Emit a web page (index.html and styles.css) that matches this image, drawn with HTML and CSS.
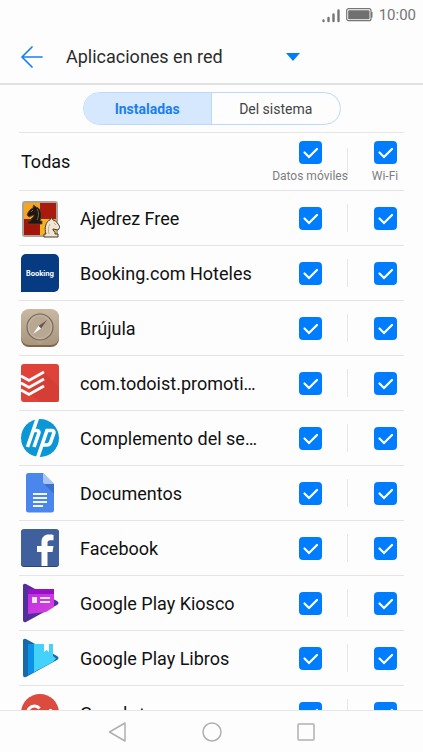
FILE: index.html
```html
<!DOCTYPE html>
<html lang="es">
<head>
    <meta charset="UTF-8">
    <meta name="viewport" content="width=device-width, initial-scale=1.0">
    <title>Aplicaciones en red</title>
    <link rel="stylesheet" href="styles.css">
</head>
<body>
<div class="status-bar">
    <svg class="signal" viewBox="0 0 18 15" width="18" height="15" stroke="#757575" stroke-width="2.400" stroke-linecap="round">
        <path d="M1.500 12.500v0.500M6.500 10v3M11.500 6.500v6.500M16.500 2.500v10.500"/>
    </svg>
    <svg class="battery" viewBox="0 0 27 14" width="27" height="14">
        <rect x="0.700" y="0.700" width="24.300" height="12" rx="2" fill="none" stroke="#757575" stroke-width="1.200"/>
        <rect x="2.200" y="2.200" width="21.300" height="9" rx="1" fill="#707070"/>
        <path d="M25 4h1.500v5.500H25z" fill="#757575"/>
    </svg>
    <span class="clock">10:00</span>
</div>

<header class="header">
    <button class="back" aria-label="Atrás">
        <svg viewBox="0 0 22 22" width="22" height="22" fill="none" stroke="#1a80ee" stroke-width="1.700" stroke-linecap="round" stroke-linejoin="round">
            <path d="M11 1L1 11l10 10M1 11h20"/>
        </svg>
    </button>
    <div class="view-picker">
        <select aria-label="Vista">
            <option>Aplicaciones en red</option>
        </select>
        <svg class="arrow" viewBox="0 0 14 8" width="14" height="8"><path d="M0 0h14L7 8z" fill="#007dff"/></svg>
    </div>
</header>

<div class="tabs">
    <button class="tab active">Instaladas</button>
    <button class="tab">Del sistema</button>
</div>

<main class="app-list">
    <table>
        <colgroup>
            <col class="col-icon">
            <col>
            <col class="col-data">
            <col class="col-wifi">
        </colgroup>
        <thead>
        <tr>
            <th class="all" colspan="2">Todas</th>
            <th class="data"><label><input type="checkbox" checked>Datos móviles</label></th>
            <th class="wifi"><label><input type="checkbox" checked>Wi-Fi</label></th>
        </tr>
        </thead>
        <tbody>
        <tr>
            <td class="icon">
                <svg viewBox="0 0 40 40" width="40" height="40">
                    <rect x="2" y="3" width="36" height="36" rx="3" fill="#aaa49e"/>
                    <path d="M4 5h16v16H4z" fill="#f6a51c"/>
                    <path d="M20 5h16v16H20z" fill="#a91b0d"/>
                    <path d="M4 21h16v16H4z" fill="#a31508"/>
                    <path d="M20 21h16v16H20z" fill="#f6b320"/>
                    <path d="M8 26v-3h2.500c0-3 4-4 3.500-6l-5 2-2-2c1-3 3-6 6-7l0.500-3 2.500 2c4 1 6 5 5 11l-1 3h2v3z" fill="#201712" stroke="#5d4129" stroke-width="0.800"/>
                    <path d="M13 12l-2 2M17 11c2 3 2 7 0 11" fill="none" stroke="#a28460" stroke-width="0.700"/>
                    <path d="M24 39v-3h2c-2-6 0-13 4-14l1-3 2 3c4 1 5 4 7 7l-2 3-5-1c-1 2 3 2 2 5h3v3z" fill="#eee5d5" stroke="#4c382a" stroke-width="1"/>
                    <path d="M30 26c-2 3-2 6-1 10M34 25l2 2" fill="none" stroke="#ad9c85" stroke-width="0.800"/>
                </svg>
            </td>
            <td class="name">Ajedrez Free</td>
            <td class="data"><input type="checkbox" aria-label="Ajedrez Free, datos móviles" checked></td>
            <td class="wifi"><input type="checkbox" aria-label="Ajedrez Free, Wi-Fi" checked></td>
        </tr>
        <tr>
            <td class="icon">
                <svg viewBox="0 0 40 40" width="40" height="40">
                    <path d="M6 1h28a5 5 0 0 1 5 5v28a5 5 0 0 1-5 5H1V6a5 5 0 0 1 5-5z" fill="#063b82"/>
                    <text class="booking-text" x="20" y="23" text-anchor="middle">Booking</text>
                </svg>
            </td>
            <td class="name">Booking.com Hoteles</td>
            <td class="data"><input type="checkbox" aria-label="Booking.com Hoteles, datos móviles" checked></td>
            <td class="wifi"><input type="checkbox" aria-label="Booking.com Hoteles, Wi-Fi" checked></td>
        </tr>
        <tr>
            <td class="icon">
                <svg viewBox="0 0 40 40" width="40" height="40">
                    <defs>
                        <linearGradient id="wood" x2="0" y2="1"><stop stop-color="#c9b8a2"/><stop offset="1" stop-color="#a9967f"/></linearGradient>
                    </defs>
                    <rect x="1" y="2" width="38" height="37" rx="8" fill="#80654d"/>
                    <rect x="1" y="1" width="38" height="36" rx="8" fill="url(#wood)"/>
                    <path d="M3 20L20 3l17 17-17 17z" fill="#b8a791" opacity="0.500"/>
                    <circle cx="20" cy="19" r="13" fill="#b8a793" stroke="#796a5c" stroke-width="1.200"/>
                    <circle cx="20" cy="19" r="11.500" fill="none" stroke="#cfc1af" stroke-width="0.600"/>
                    <path d="M27 12l-8.500 6 2.500 2.500z" fill="#6b5745"/>
                    <path d="M13 26l5.500-8 2.500 2.500z" fill="#fff"/>
                </svg>
            </td>
            <td class="name">Brújula</td>
            <td class="data"><input type="checkbox" aria-label="Brújula, datos móviles" checked></td>
            <td class="wifi"><input type="checkbox" aria-label="Brújula, Wi-Fi" checked></td>
        </tr>
        <tr>
            <td class="icon">
                <svg viewBox="0 0 40 40" width="40" height="40">
                    <rect x="1" y="1" width="38" height="38" rx="3" fill="#df4238"/>
                    <path d="M24 9l15 15v15H21l-12-9z" fill="#cb3930" opacity="0.500"/>
                    <path d="M1 13l8 4.500L24 9M1 20l8 4.500L24 16M1 27l8 4.500L24 23" fill="none" stroke="#fff" stroke-width="2.800"/>
                </svg>
            </td>
            <td class="name">com.todoist.promotion</td>
            <td class="data"><input type="checkbox" aria-label="com.todoist.promotion, datos móviles" checked></td>
            <td class="wifi"><input type="checkbox" aria-label="com.todoist.promotion, Wi-Fi" checked></td>
        </tr>
        <tr>
            <td class="icon">
                <svg viewBox="0 0 40 40" width="40" height="40">
                    <circle cx="20" cy="20" r="19" fill="#0b96d5"/>
                    <g fill="none" stroke="#fff" stroke-width="3.600">
                        <path d="M17.500 0L7.500 29M12 12.500h4.500q3.200 0 2.200 3L14 29"/>
                        <path d="M17.500 40l9.500-27.500h4.500q3.200 0 2.200 3l-3 8.500q-1 3-4 3h-4"/>
                    </g>
                </svg>
            </td>
            <td class="name">Complemento del servicio</td>
            <td class="data"><input type="checkbox" aria-label="Complemento del servicio, datos móviles" checked></td>
            <td class="wifi"><input type="checkbox" aria-label="Complemento del servicio, Wi-Fi" checked></td>
        </tr>
        <tr>
            <td class="icon">
                <svg viewBox="0 0 40 40" width="40" height="40">
                    <path d="M8 0h15l11 11v26a2.500 2.500 0 0 1-2.500 2.500h-23A2.500 2.500 0 0 1 6 37V2.500A2.500 2.500 0 0 1 8 0z" fill="#4a86ec"/>
                    <path d="M24 11h10v10z" fill="#3c70cd"/>
                    <path d="M23 0l11 11H25a2 2 0 0 1-2-2z" fill="#a9c5f6"/>
                    <path d="M13 20h14v2H13zM13 24h14v2H13zM13 28h14v2H13zM13 32h10v2H13z" fill="#f2f6fe"/>
                </svg>
            </td>
            <td class="name">Documentos</td>
            <td class="data"><input type="checkbox" aria-label="Documentos, datos móviles" checked></td>
            <td class="wifi"><input type="checkbox" aria-label="Documentos, Wi-Fi" checked></td>
        </tr>
        <tr>
            <td class="icon">
                <svg viewBox="0 0 40 40" width="40" height="40">
                    <rect x="1" y="2" width="38" height="37" rx="3" fill="#2b4275"/>
                    <rect x="1" y="1" width="38" height="37" rx="3" fill="#405f9d"/>
                    <path d="M21.500 38V24H17v-6h4.500v-4c0-5 3-7.500 7.500-7.500 2 0 3.500.2 4.500.4v5.300h-3c-2.300 0-3 1-3 3V18h6l-1 6h-5v14z" fill="#fff"/>
                </svg>
            </td>
            <td class="name">Facebook</td>
            <td class="data"><input type="checkbox" aria-label="Facebook, datos móviles" checked></td>
            <td class="wifi"><input type="checkbox" aria-label="Facebook, Wi-Fi" checked></td>
        </tr>
        <tr>
            <td class="icon">
                <svg viewBox="0 0 40 40" width="40" height="40">
                    <defs>
                        <linearGradient id="kiosk" x2="1" y2="1"><stop stop-color="#bd2de5"/><stop offset="1" stop-color="#d442dc"/></linearGradient>
                    </defs>
                    <path d="M3 2.500Q3 0 6 1l31 17q3 2 0 4L6 39q-3 1-3-2z" fill="#51309d"/>
                    <path d="M8 6h26v18l-8 5-18 2z" fill="url(#kiosk)"/>
                    <path d="M8 6h26v5H8z" fill="#9910c7"/>
                    <path d="M12 14h5v6h-5zM20 14h10v2H20zM20 18h10v2H20z" fill="#f8e6fd"/>
                </svg>
            </td>
            <td class="name">Google Play Kiosco</td>
            <td class="data"><input type="checkbox" aria-label="Google Play Kiosco, datos móviles" checked></td>
            <td class="wifi"><input type="checkbox" aria-label="Google Play Kiosco, Wi-Fi" checked></td>
        </tr>
        <tr>
            <td class="icon">
                <svg viewBox="0 0 40 40" width="40" height="40">
                    <path d="M3 2.500Q3 0 6 1l31 17q3 2 0 4L6 39q-3 1-3-2z" fill="#1769aa"/>
                    <path d="M8 6h6v28l-6 3z" fill="#0a91e8"/>
                    <path d="M14 6h19v12l3 2.500L33 24 14 34z" fill="#43d2fa"/>
                    <path d="M24 6h5v8l-2.500-2-2.500 2z" fill="#fff"/>
                </svg>
            </td>
            <td class="name">Google Play Libros</td>
            <td class="data"><input type="checkbox" aria-label="Google Play Libros, datos móviles" checked></td>
            <td class="wifi"><input type="checkbox" aria-label="Google Play Libros, Wi-Fi" checked></td>
        </tr>
        <tr>
            <td class="icon">
                <svg viewBox="0 0 40 40" width="40" height="40">
                    <circle cx="20" cy="20" r="19" fill="#db4c3f"/>
                    <path d="M19.500 15.500a6.500 6.500 0 1 0 1 6H14M30.500 16v9M26 20.500h9" fill="none" stroke="#fff" stroke-width="3"/>
                </svg>
            </td>
            <td class="name">Google+</td>
            <td class="data"><input type="checkbox" aria-label="Google+, datos móviles" checked></td>
            <td class="wifi"><input type="checkbox" aria-label="Google+, Wi-Fi" checked></td>
        </tr>
        </tbody>
    </table>
</main>

<nav class="nav-bar">
    <button aria-label="Atrás">
        <svg viewBox="0 0 20 20" width="20" height="20"><path d="M17 1v18L1.500 10z"/></svg>
    </button>
    <button aria-label="Inicio">
        <svg viewBox="0 0 20 20" width="20" height="20"><circle cx="10" cy="10" r="9"/></svg>
    </button>
    <button aria-label="Recientes">
        <svg viewBox="0 0 20 20" width="20" height="20"><rect x="2" y="2" width="16" height="16" rx="1"/></svg>
    </button>
</nav>
</body>
</html>
```

FILE: styles.css
```css
* {
    box-sizing: border-box;
}
body {
    font-family: Roboto, "Noto Sans", sans-serif;
    margin: 0;
    display: flex;
    flex-direction: column;
    height: 100vh;
    overflow: hidden;
    background-color: #fdfdfd;
    color: #111;
}
button,
select {
    font-family: inherit;
    border: none;
    background: none;
    padding: 0;
    cursor: pointer;
}
svg {
    display: block;
}

.status-bar {
    display: flex;
    justify-content: flex-end;
    align-items: center;
    height: 30px;
    padding-right: 7px;
    flex-shrink: 0;
}
.battery {
    margin: 0 6px;
}
.clock {
    font-size: 15px;
    color: #757575;
}

.header {
    display: flex;
    align-items: center;
    gap: 23px;
    height: 55px;
    padding: 0 21px;
    border-bottom: 2px solid #e2e2e2;
    flex-shrink: 0;
}
.view-picker {
    display: grid;
    align-items: center;
    width: 234px;
}
.view-picker select,
.view-picker .arrow {
    grid-area: 1 / 1;
}
.view-picker select {
    appearance: none;
    width: 100%;
    height: 40px;
    font-size: 18px;
    color: #2b2b2b;
}
.view-picker .arrow {
    justify-self: end;
    pointer-events: none;
}

.tabs {
    display: flex;
    width: 258px;
    height: 33px;
    margin: 7px auto;
    border: 1px solid #bcd9f7;
    border-radius: 17px;
    overflow: hidden;
    flex-shrink: 0;
}
.tab {
    flex: 1;
    font-size: 14px;
    color: #444;
}
.tab.active {
    background-color: #d6e8fd;
    border-right: 1px solid #bcd9f7;
    color: #1a80ee;
    font-weight: bold;
}

.app-list {
    flex: 1;
    min-height: 0;
    padding: 0 19px;
    overflow-y: auto;
    scrollbar-width: none;
}
table {
    width: 100%;
    table-layout: fixed;
    border-collapse: separate;
    border-spacing: 0;
    border-top: 1px solid #e6e6e6;
}
.col-icon {
    width: 61px;
}
.col-data {
    width: 76px;
}
.col-wifi {
    width: 56px;
}
th,
td {
    height: 55px;
    padding: 0;
    border-bottom: 1px solid #e4e4e4;
    font-weight: normal;
}
th {
    height: 58px;
}
.all {
    padding-left: 2px;
    font-size: 18px;
    text-align: left;
}
.icon {
    padding-left: 1px;
}
.name {
    padding-right: 12px;
    font-size: 18px;
    white-space: nowrap;
    overflow: hidden;
    text-overflow: ellipsis;
}
.data {
    background: linear-gradient(#e6e6e6, #e6e6e6) no-repeat right center / 1px 28px;
}
.wifi {
    padding-left: 18px;
}
th label {
    display: flex;
    flex-direction: column;
    align-items: center;
    gap: 5px;
    font-size: 12px;
    line-height: 14px;
    color: #7d7d7d;
    white-space: nowrap;
}
.booking-text {
    font-family: Inter, sans-serif;
    font-size: 7px;
    font-weight: bold;
    fill: #fff;
}

input[type="checkbox"] {
    appearance: none;
    display: block;
    width: 23px;
    height: 23px;
    margin: 0 auto;
    border: 1px solid #9a9a9a;
    border-radius: 4px;
}
input[type="checkbox"]:checked {
    border: none;
    background: #007dff url("data:image/svg+xml,%3Csvg xmlns='http://www.w3.org/2000/svg' viewBox='0 0 23 23'%3E%3Cpath d='M5.500 11.500l4.500 4.500 8-8' fill='none' stroke='white' stroke-width='2.200' stroke-linecap='round'/%3E%3C/svg%3E");
}

.nav-bar {
    display: flex;
    justify-content: center;
    align-items: center;
    gap: 74px;
    height: 42px;
    border-top: 1px solid #e6e6e6;
    flex-shrink: 0;
}
.nav-bar svg {
    fill: none;
    stroke: #b0b0b0;
    stroke-width: 1.5;
    stroke-linejoin: round;
}
```
